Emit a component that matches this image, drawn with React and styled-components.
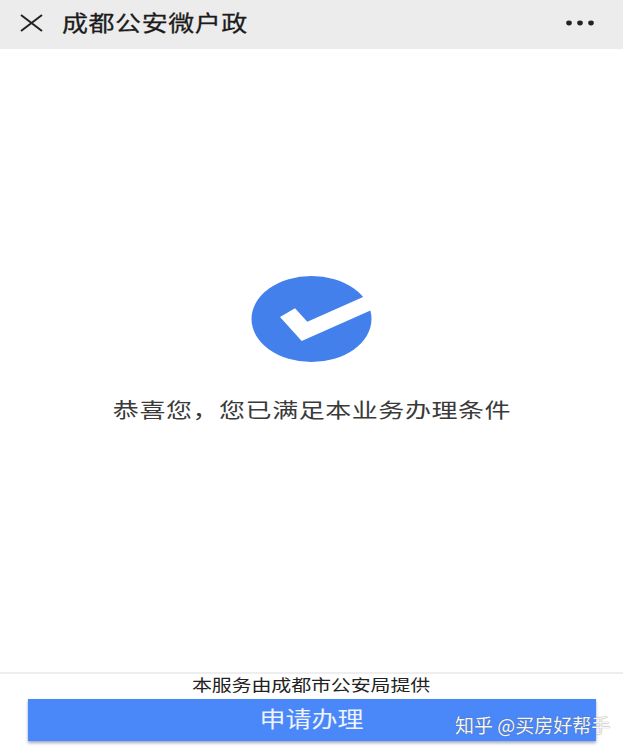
import React from "react";
import styled, { createGlobalStyle } from "styled-components";

const Global = createGlobalStyle`
  html, body { margin: 0; padding: 0; background: #fff; }
  body { font-family: "Noto Sans CJK SC", "Liberation Sans", sans-serif; }
`;
const Page = styled.div`
  position: relative; width: 623px; height: 753px; overflow: hidden;
  display: flex; flex-direction: column; background: #fff;
`;
const NavBar = styled.header`
  height: 49px; flex: none; background: #ececec; display: flex; align-items: center;
  padding: 0 28px 3px 20px; box-sizing: border-box;
`;
const NavTitle = styled.h1`
  margin: 0 0 3px 19px; flex: 1; font-size: 26px; font-weight: 400; color: #1c1c1c;
  letter-spacing: .55px; line-height: 28px; white-space: nowrap;
  transform: scaleY(.84); -webkit-text-stroke: .3px #1c1c1c;
`;
const Main = styled.main`
  flex: 1; display: flex; flex-direction: column; align-items: center; padding-top: 226px;
`;
const Message = styled.p`
  margin: 27px 0 0; font-size: 26px; line-height: 38px; color: #3a3a3a; letter-spacing: .55px;
  white-space: nowrap; transform: scaleY(.8); padding-left: 1px;
`;
const Footer = styled.footer`
  flex: none; height: 81px; border-top: 2px solid #eeeeee; box-sizing: border-box;
  display: flex; flex-direction: column; align-items: center;
`;
const Provider = styled.div`
  height: 25px; font-size: 20px; line-height: 20px; letter-spacing: -.15px; color: #222;
  white-space: nowrap; transform: scaleY(.82); padding-right: 1px;
`;
const ApplyButton = styled.button`
  width: 568px; height: 42px; border: 0; padding: 0 0 6px; background: #4a87f8; color: #eef3fd;
  font: inherit; font-size: 26px; box-shadow: 0 2px 3px rgba(40,60,110,.45);
`;
const ButtonLabel = styled.span`
  display: inline-block; transform: scaleY(.82); line-height: 30px;
`;
const Watermark = styled.div`
  position: absolute; left: 455px; top: 712px; font-size: 19px; line-height: 26px; color: #f6f6f6;
  white-space: nowrap; text-shadow: 0 0 1px rgba(70,70,70,.8);
`;

export default function App() {
  return (
    <Page>
      <Global />
      <NavBar>
        <svg width="23" height="18" viewBox="0 0 23 18" fill="none" stroke="#222" strokeWidth="2">
          <path d="M1 1 22 17M22 1 1 17" />
        </svg>
        <NavTitle>成都公安微户政</NavTitle>
        <svg width="30" height="6" viewBox="0 0 30 6" fill="#222">
          <ellipse cx="4" cy="3" rx="2.8" ry="2.4" />
          <ellipse cx="15" cy="3" rx="2.8" ry="2.4" />
          <ellipse cx="26" cy="3" rx="2.8" ry="2.4" />
        </svg>
      </NavBar>
      <Main>
        <svg width="124" height="88" viewBox="250 274 124 88">
          <ellipse cx="311.5" cy="318" rx="60" ry="43" fill="#4480ec" />
          <path d="M280 316 295 307.3 307.3 320.7 362 296.5 374 290 374 308 369.3 310 301.7 340Z" fill="#fff" />
        </svg>
        <Message>恭喜您，您已满足本业务办理条件</Message>
      </Main>
      <Footer>
        <Provider>本服务由成都市公安局提供</Provider>
        <ApplyButton><ButtonLabel>申请办理</ButtonLabel></ApplyButton>
      </Footer>
      <Watermark>知乎 @买房好帮手</Watermark>
    </Page>
  );
}
